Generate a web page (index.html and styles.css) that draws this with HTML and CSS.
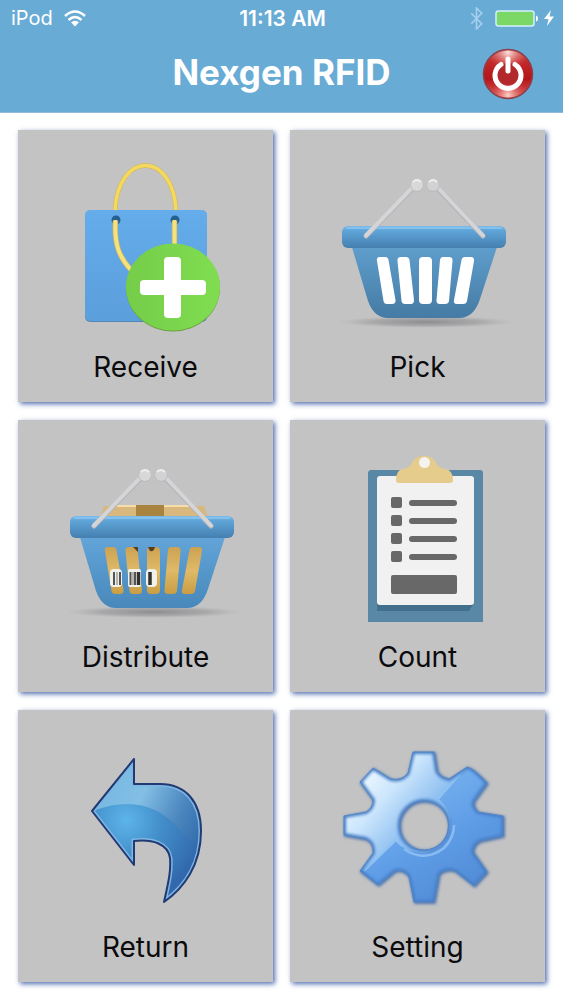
FILE: index.html
```
<!DOCTYPE html>
<html lang="en">
<head>
<meta charset="utf-8">
<meta name="viewport" content="width=device-width, initial-scale=1">
<title>Nexgen RFID</title>
<link rel="stylesheet" href="styles.css">
</head>
<body>
<header class="header">
  <div class="status">
    <div class="status-left">
      <span>iPod</span>
      <svg class="wifi" viewBox="0 0 22 17" aria-hidden="true">
        <g fill="none" stroke="#fff" stroke-width="2.500"><path d="M1 6Q11-3 21 6"/><path d="M4.500 10Q11 4 17.500 10"/></g>
        <path fill="#fff" d="M7 12.300Q11 9 15 12.300L11 16.500Z"/>
      </svg>
    </div>
    <div class="clock">11:13 AM</div>
    <div class="status-right">
      <svg class="bluetooth" viewBox="0 0 12 22" aria-hidden="true"><path d="M1 6L11 16L6 21V1L11 6L1 16" fill="none" stroke="#a6d0ee" stroke-width="1.500"/></svg>
      <svg class="battery" viewBox="0 0 43 17" aria-hidden="true">
        <rect x="1" y="1" width="38" height="15" rx="2.500" fill="#7bd766" stroke="#d5efff" stroke-width="1.500"/>
        <path d="M41 5.500Q43 6 43 8.500T41 11.500Z" fill="#fff"/>
      </svg>
      <svg class="bolt" viewBox="0 0 10 16" aria-hidden="true"><path d="M7 0L0 9H4.500L3 16L10 6.500H5.500Z" fill="#fff"/></svg>
    </div>
  </div>
  <div class="titlebar">
    <h1 class="title">Nexgen RFID</h1>
    <button class="power" type="button" aria-label="Power">
      <svg viewBox="0 0 52 52" aria-hidden="true">
        <defs>
          <linearGradient id="redFill" x1="0" y1="0" x2="0" y2="1"><stop offset="0" stop-color="#c8706e"/><stop offset=".25" stop-color="#c3282a"/><stop offset=".6" stop-color="#b51518"/><stop offset="1" stop-color="#d8605c"/></linearGradient>
          <radialGradient id="redGlow" cx=".5" cy=".95" r=".38"><stop offset="0" stop-color="#ffd2c8"/><stop offset="1" stop-color="#e05050" stop-opacity="0"/></radialGradient>
          <radialGradient id="redTop" cx=".5" cy=".04" r=".42"><stop offset="0" stop-color="#ffe3de"/><stop offset="1" stop-color="#e05050" stop-opacity="0"/></radialGradient>
        </defs>
        <circle cx="26" cy="26" r="24.500" fill="url(#redFill)" stroke="#8b3f4c" stroke-width="1.500"/>
        <circle cx="26" cy="26" r="23.500" fill="url(#redGlow)"/>
        <circle cx="26" cy="26" r="23.500" fill="url(#redTop)"/>
        <circle cx="26" cy="26" r="11" fill="#b3282a"/>
        <path d="M19 16.500A13 13 0 1 0 33 16.500M26 11V23" fill="none" stroke="#fff" stroke-width="5" stroke-linecap="round"/>
      </svg>
    </button>
  </div>
</header>

<main class="grid">
  <button class="card" type="button">
    <svg class="art" viewBox="18 131 255 212" aria-hidden="true">
      <defs>
        <linearGradient id="bag" x1="0" y1="0" x2="0" y2="1"><stop offset="0" stop-color="#64acea"/><stop offset="1" stop-color="#5b9fdc"/></linearGradient>
        <linearGradient id="green" x1="0" y1="0" x2="1" y2="0"><stop offset="0" stop-color="#75cd49"/><stop offset="1" stop-color="#80dd50"/></linearGradient>
      </defs>
      <path d="M115 213C117 151 174 151 176 213" fill="none" stroke="#d2b64a" stroke-width="4.500"/>
      <path d="M115 213C117 151 174 151 176 213" fill="none" stroke="#f3d960" stroke-width="3.500"/>
      <rect x="85" y="212" width="122" height="111" rx="5" fill="#5288b8"/>
      <rect x="85" y="211" width="122" height="111" rx="5" fill="url(#bag)"/>
      <circle cx="116" cy="221" r="4.500" fill="#285f91"/><circle cx="175" cy="221" r="4.500" fill="#285f91"/>
      <path d="M115.500 222C114 245 119 258 131 271M174.500 222V248" fill="none" stroke="#c4b064" stroke-width="5.500"/>
      <path d="M115.500 221C114 245 119 258 131 271M174.500 221V248" fill="none" stroke="#f4e17f" stroke-width="4"/>
      <ellipse cx="173" cy="289" rx="47" ry="43.500" fill="#6aa143"/>
      <ellipse cx="173" cy="288" rx="47" ry="43.500" fill="url(#green)"/>
      <rect x="164" y="258" width="17" height="61" rx="4" fill="#fff"/>
      <rect x="140" y="281" width="66" height="15" rx="4" fill="#fff"/>
    </svg>
    <span class="label">Receive</span>
  </button>

  <button class="card" type="button">
    <svg class="art" viewBox="290 131 255 212" aria-hidden="true">
      <defs>
        <linearGradient id="rim" x1="0" y1="0" x2="0" y2="1"><stop offset="0" stop-color="#7dbbe9"/><stop offset=".2" stop-color="#60a5d9"/><stop offset="1" stop-color="#457fb0"/></linearGradient>
        <linearGradient id="tub" x1="0" y1="0" x2="0" y2="1"><stop offset="0" stop-color="#609fce"/><stop offset="1" stop-color="#457ba4"/></linearGradient>
        <linearGradient id="tubLight" x1="0" y1="0" x2="0" y2="1"><stop offset="0" stop-color="#64a6da"/><stop offset="1" stop-color="#4888bb"/></linearGradient>
        <radialGradient id="floor"><stop offset="0" stop-color="#8c8c8e"/><stop offset=".6" stop-color="#9c9c9e" stop-opacity=".7"/><stop offset="1" stop-color="#aaa" stop-opacity="0"/></radialGradient>
        <g id="slots">
          <path d="M380 258H385Q388 258 388.500 261L395.500 301Q396 305 392 305H387Q384 305 383.500 302L377 262Q376 258 380 258Z"/>
          <path d="M401 258H406Q409 258 409.500 261L414 301Q414 305 411 305H405Q402 305 401.500 302L397.500 262Q397 258 401 258Z"/>
          <rect x="419" y="258" width="13" height="47" rx="4"/>
          <path d="M443 258H449Q453 258 452.500 262L449 302Q448.500 305 445 305H440Q436 305 436.500 301L440 261Q440.500 258 443 258Z"/>
          <path d="M465 258H471Q474.500 258 474 262L467 302Q466.500 305 463 305H457Q453 305 454 301L461.500 261Q462 258 465 258Z"/>
        </g>
        <g id="handles">
          <path d="M366 237L411 191M483 237L439 191" stroke="#b4b4b8" stroke-width="5" stroke-linecap="round"/>
          <path d="M366 236.500L411 190M483 236.500L439 190" stroke="#d5d5d8" stroke-width="4" stroke-linecap="round"/>
          <circle cx="417" cy="186.500" r="6.500" fill="#b9b9bb"/><circle cx="433" cy="186.500" r="6.500" fill="#b9b9bb"/>
          <circle cx="417" cy="186" r="6" fill="#d8d8d9"/><circle cx="433" cy="186" r="6" fill="#d2d2d4"/>
          <path d="M413 183Q417 179 421 183M429 183Q433 179 437 183" fill="none" stroke="#ededed" stroke-width="2"/>
        </g>
      </defs>
      <ellipse cx="426" cy="323" rx="88" ry="6" fill="url(#floor)"/>
      <path d="M351 245H498L480 300Q474 319 459 319H388Q374 319 368 302Z" fill="url(#tub)"/>
      <rect x="342" y="227" width="164" height="22" rx="6" fill="url(#rim)"/>
      <path d="M347 229H501" stroke="#82c0ee" stroke-width="2" stroke-linecap="round"/>
      <use href="#slots" fill="#fff"/>
      <use href="#handles"/>
    </svg>
    <span class="label">Pick</span>
  </button>

  <button class="card" type="button">
    <svg class="art" viewBox="290 131 255 212" aria-hidden="true">
      <defs>
        <linearGradient id="carton" x1="0" y1="0" x2="0" y2="1"><stop offset="0" stop-color="#cba252"/><stop offset=".5" stop-color="#e0ba68"/><stop offset="1" stop-color="#c99d43"/></linearGradient>
      </defs>
      <ellipse cx="426" cy="323" rx="88" ry="6" fill="url(#floor)"/>
      <path d="M376 217H476L480 229H372Z" fill="#d8b87c"/>
      <path d="M389 217H463" stroke="#f6ddaa" stroke-width="2"/>
      <rect x="408" y="216" width="28" height="13" fill="#a98340"/>
      <path d="M351 245H498L480 300Q474 319 459 319H388Q374 319 368 302Z" fill="url(#tubLight)"/>
      <rect x="342" y="227" width="164" height="22" rx="6" fill="url(#rim)"/>
      <path d="M347 229H501" stroke="#82c0ee" stroke-width="2" stroke-linecap="round"/>
      <use href="#slots" fill="url(#carton)"/>
      <path d="M420 258H427Q426 263 422 262ZM405 258H410V263Z" fill="#563f20"/>
      <g fill="#f1f1ec"><rect x="382" y="280" width="12" height="18" rx="4"/><rect x="400" y="280" width="13" height="18" rx="2"/><rect x="418" y="280" width="11" height="18" rx="4"/></g>
      <path d="M386 283V296M392 283V296M402.500 283V296M407 283V296" stroke="#555" stroke-width="2"/>
      <path d="M389 283V296M405 283V296" stroke="#777"/>
      <path d="M410.500 283V296M422 283V296" stroke="#35302c" stroke-width="3.500"/>
      <use href="#handles"/>
    </svg>
    <span class="label">Distribute</span>
  </button>

  <button class="card" type="button">
    <svg class="art" viewBox="290 420 255 212" aria-hidden="true">
      <path d="M370 470H480Q483 470 483 473V622H368V472Z" fill="#5888a5"/>
      <path d="M377 603V611H469L474 603Z" fill="#42708c"/>
      <rect x="377" y="476" width="97" height="129" rx="3" fill="#f1f1f2"/>
      <path d="M396 480Q396 470 403 469C410 468 411 464 414 460Q417 456 424 456T434 460C437 464 438 468 445 469Q453 470 453 480Q453 483 450 483H399Q396 483 396 480Z" fill="#e6cc8c"/>
      <circle cx="424.500" cy="462.500" r="5.500" fill="#f5f3ef"/>
      <g fill="#686868">
        <rect x="391" y="497" width="11" height="11" rx="2"/><rect x="391" y="515" width="11" height="11" rx="2"/><rect x="391" y="533" width="11" height="11" rx="2"/><rect x="391" y="551" width="11" height="11" rx="2"/>
        <rect x="409" y="500" width="48" height="6" rx="3"/><rect x="409" y="518" width="48" height="6" rx="3"/><rect x="409" y="536" width="48" height="6" rx="3"/><rect x="409" y="554" width="48" height="6" rx="3"/>
        <rect x="391" y="575" width="66" height="19" rx="2"/>
      </g>
    </svg>
    <span class="label">Count</span>
  </button>

  <button class="card" type="button">
    <svg class="art" viewBox="18 710 255 212" aria-hidden="true">
      <defs>
        <linearGradient id="arrowTop" x1="0" y1="0" x2="1" y2=".6"><stop offset="0" stop-color="#6fb5df"/><stop offset=".45" stop-color="#83bfe5"/><stop offset=".75" stop-color="#4b86be"/><stop offset="1" stop-color="#2f68aa"/></linearGradient>
        <radialGradient id="arrowLow" gradientUnits="userSpaceOnUse" cx="126" cy="820" r="78"><stop offset="0" stop-color="#5db5ea"/><stop offset=".45" stop-color="#438fcb"/><stop offset="1" stop-color="#3269ad"/></radialGradient>
        <clipPath id="arrowClip"><path d="M92 811L134 759V784H160C185 784 201 801 201 831C201 865 184 888 164 902C169 880 171 870 170 858C168 844 153 839 134 841V865Z"/></clipPath>
      </defs>
      <g clip-path="url(#arrowClip)">
        <rect x="90" y="756" width="114" height="150" fill="url(#arrowTop)"/>
        <path d="M90 812Q145 790 178 828Q198 852 204 840V906H90Z" fill="url(#arrowLow)"/>
        <path d="M92 811L134 759V784H160C185 784 201 801 201 831C201 865 184 888 164 902C169 880 171 870 170 858C168 844 153 839 134 841V865Z" fill="none" stroke="#7fb5e0" stroke-width="5"/>
      </g>
      <path d="M92 811L134 759V784H160C185 784 201 801 201 831C201 865 184 888 164 902C169 880 171 870 170 858C168 844 153 839 134 841V865Z" fill="none" stroke="#203a75" stroke-width="2" stroke-linejoin="round"/>
    </svg>
    <span class="label">Return</span>
  </button>

  <button class="card" type="button">
    <svg class="art" viewBox="290 710 255 212" aria-hidden="true">
      <defs>
        <linearGradient id="gearFill" gradientUnits="userSpaceOnUse" x1="362" y1="775" x2="482" y2="880"><stop offset="0" stop-color="#edf8ff"/><stop offset=".2" stop-color="#cce6fc"/><stop offset=".45" stop-color="#8fc0f1"/><stop offset="1" stop-color="#75b1ef"/></linearGradient>
        <linearGradient id="gearShade" gradientUnits="userSpaceOnUse" x1="420" y1="780" x2="480" y2="885"><stop offset="0" stop-color="#77b2ee"/><stop offset=".5" stop-color="#5f9de7"/><stop offset="1" stop-color="#518bd6"/></linearGradient>
        <path id="gear" fill-rule="evenodd" d="M413 752H434L437 771Q440 777 449 779L467 767Q473 768 487 783L474 801Q472 806 478 812L503 816V836L480 841Q473 844 473 852L487 872L474 886L455 871Q446 868 439 874L434 902H414L409 877Q404 869 395 871L378 885L360 871L373 853Q374 843 366 839L344 835V816L366 812Q373 808 373 800L360 782L373 768L391 779Q402 781 408 773ZM424 801A24.500 24.500 0 1 0 424 850A24.500 24.500 0 1 0 424 801Z"/>
        <clipPath id="gearClip"><path clip-rule="evenodd" d="M413 752H434L437 771Q440 777 449 779L467 767Q473 768 487 783L474 801Q472 806 478 812L503 816V836L480 841Q473 844 473 852L487 872L474 886L455 871Q446 868 439 874L434 902H414L409 877Q404 869 395 871L378 885L360 871L373 853Q374 843 366 839L344 835V816L366 812Q373 808 373 800L360 782L373 768L391 779Q402 781 408 773ZM424 801A24.500 24.500 0 1 0 424 850A24.500 24.500 0 1 0 424 801Z"/></clipPath>
        <filter id="soft" x="-10%" y="-10%" width="120%" height="120%"><feGaussianBlur stdDeviation="1.500"/></filter>
      </defs>
      <use href="#gear" x="1" y="1" fill="#466fa8" stroke="#527ab0" stroke-width="2" filter="url(#soft)"/>
      <use href="#gear" fill="url(#gearFill)"/>
      <g clip-path="url(#gearClip)">
        <path d="M470 764L439 799Q453 812 450 830Q444 850 424 853Q405 852 395 841L359 874L378 908H510V764Z" fill="url(#gearShade)"/>
        <path d="M467 766L438 799M395 841L364 871" stroke="#8fc3f4" stroke-width="2"/>
        <g filter="url(#soft)"><use href="#gear" fill="none" stroke="#477fc8" stroke-width="4"/></g>
      </g>
      <path d="M404 849Q424 863 444 848Q454 838 454 825" fill="none" stroke="#8abcf0" stroke-width="2.500"/>
      <use href="#gear" fill="none" stroke="#5584c0"/>
    </svg>
    <span class="label">Setting</span>
  </button>
</main>
</body>
</html>
```
FILE: styles.css
```
* {
  box-sizing: border-box;
}

body {
  margin: 0;
  background: #fff;
  color: #0b0b0d;
  font-family: Inter, "Liberation Sans", sans-serif;
}

button {
  padding: 0;
  border: 0;
  background: none;
  color: inherit;
  font: inherit;
  cursor: pointer;
}

svg {
  display: block;
}

.header {
  background: #68abd5;
  border-bottom: 1px solid #8fbbd9;
  color: #fff;
}

.status {
  display: grid;
  grid-template-columns: 1fr auto 1fr;
  align-items: center;
  height: 36px;
  padding: 0 9px 0 11px;
  font-size: 20px;
}

.status-left,
.status-right {
  display: flex;
  align-items: center;
}

.status-left {
  gap: 11px;
}

.status-right {
  justify-content: flex-end;
}

.clock {
  font-size: 21px;
  font-weight: 600;
}

.wifi {
  width: 22px;
  height: 17px;
}

.bluetooth {
  width: 13px;
  height: 23px;
  margin-right: 12px;
}

.battery {
  width: 43px;
  height: 17px;
  margin-right: 6px;
}

.bolt {
  width: 10px;
  height: 16px;
}

.titlebar {
  display: grid;
  grid-template-columns: 1fr auto 1fr;
  align-items: center;
  height: 76px;
  padding: 0 29px;
}

.title {
  grid-column: 2;
  margin: 0;
  padding-bottom: 4px;
  font-size: 35px;
  font-weight: 700;
}

.power {
  justify-self: end;
  width: 52px;
  height: 52px;
}

.grid {
  display: grid;
  grid-template-columns: 1fr 1fr;
  gap: 18px 17px;
  padding: 17px 18px 18px;
}

.card {
  display: flex;
  flex-direction: column;
  padding-bottom: 10px;
  background: #c3c3c4;
  box-shadow: 2px 2px 5px #536fb0;
}

.art {
  width: 100%;
  height: auto;
}

.label {
  width: 100%;
  font-size: 28px;
  line-height: 50px;
  text-align: center;
}
```
